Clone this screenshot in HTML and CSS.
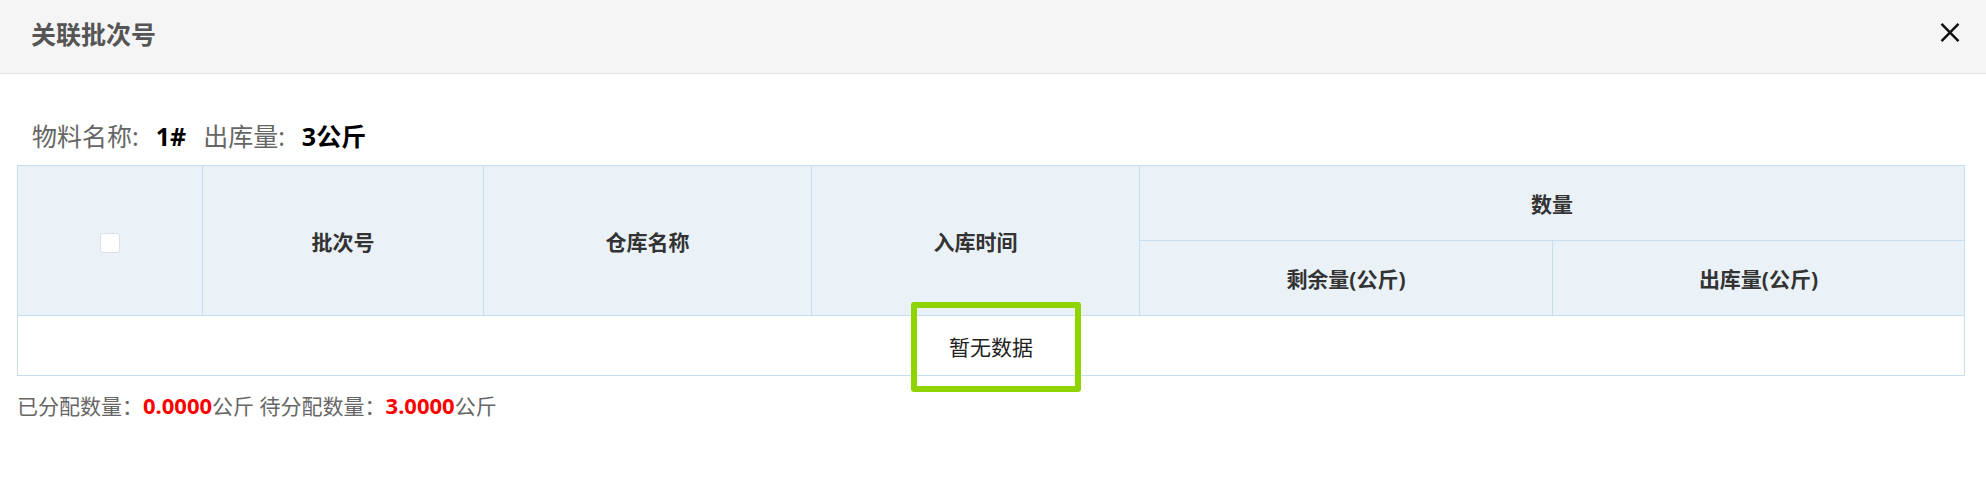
FILE: index.html
```html
<!DOCTYPE html>
<html lang="zh-CN">
<head>
<meta charset="utf-8">
<title>关联批次号</title>
<link rel="stylesheet" href="styles.css">
</head>
<body>
<div class="dialog">
  <div class="dialog-header">
    <span class="dialog-title">关联批次号</span>
    <button class="dialog-close" type="button" aria-label="关闭">
      <svg width="20" height="19" viewBox="0 0 20 19"><path d="M1.5 0.8 L18.5 18.2 M18.5 0.8 L1.5 18.2" stroke="#111" stroke-width="2.4" fill="none"/></svg>
    </button>
  </div>
  <div class="dialog-body">
    <div class="info">
      <span class="label">物料名称:</span><span class="value">1#</span><span class="label">出库量:</span><span class="value">3公斤</span>
    </div>
    <div class="table-wrap">
      <table class="batch-table">
        <colgroup>
          <col class="c-check">
          <col class="c-batch">
          <col class="c-store">
          <col class="c-time">
          <col class="c-remain">
          <col class="c-out">
        </colgroup>
        <thead>
          <tr class="row-top">
            <th rowspan="2"><span class="checkbox"></span></th>
            <th rowspan="2">批次号</th>
            <th rowspan="2">仓库名称</th>
            <th rowspan="2">入库时间</th>
            <th colspan="2">数量</th>
          </tr>
          <tr class="row-sub">
            <th>剩余量(公斤)</th>
            <th>出库量(公斤)</th>
          </tr>
        </thead>
        <tbody>
          <tr class="row-empty"><td colspan="6" class="empty">暂无数据</td></tr>
        </tbody>
      </table>
      <div class="highlight"></div>
    </div>
    <div class="summary">已分配数量：<em>0.0000</em>公斤 待分配数量：<em>3.0000</em>公斤</div>
  </div>
</div>
</body>
</html>
```
FILE: styles.css
```css
html, body {
  margin: 0;
  padding: 0;
  background: #ffffff;
}
body {
  font-family: "Noto Sans", "Noto Sans CJK SC", sans-serif;
  color: #333;
}
.dialog {
  width: 1986px;
}
.dialog-header {
  height: 73px;
  border-bottom: 1px solid #e2e2e2;
  background: #f5f5f5;
  display: flex;
  align-items: center;
  justify-content: space-between;
  padding: 0 26px 0 32px;
  box-sizing: content-box;
  width: 1928px;
}
.dialog-title {
  font-size: 25px;
  font-weight: bold;
  color: #555;
  line-height: 30px;
  margin-top: -5px;
  margin-left: -1px;
}
.dialog-close {
  border: 0;
  background: transparent;
  padding: 0;
  width: 20px;
  height: 19px;
  margin-top: -9px;
  display: flex;
}
.dialog-body {
  padding: 0 17px;
}
.info {
  padding-left: 15px;
  margin-top: 42px;
  height: 40px;
  line-height: 40px;
  font-size: 25px;
  margin-bottom: 9px;
  white-space: nowrap;
}
.info .label {
  color: #666;
}
.info .value {
  color: #000;
  font-weight: bold;
  margin-left: 17px;
  margin-right: 17px;
}
.table-wrap {
  position: relative;
  width: 1947px;
}
.batch-table {
  width: 1947px;
  table-layout: fixed;
  border-collapse: collapse;
  font-size: 21px;
}
.c-check { width: 185px; }
.c-batch { width: 281px; }
.c-store { width: 328px; }
.c-time { width: 328px; }
.c-remain { width: 413px; }
.c-out { width: 412px; }
.batch-table th,
.batch-table td {
  border: 1px solid #c6def1;
  padding: 0;
  text-align: center;
}
.batch-table th {
  background: #eaf2f8;
  font-weight: bold;
  color: #333;
}
.row-top, .row-sub {
  height: 75px;
}
.row-empty {
  height: 60px;
}
.checkbox {
  display: inline-block;
  width: 18px;
  height: 18px;
  border: 1px solid #dcdfe6;
  border-radius: 3px;
  background: #fff;
  vertical-align: middle;
}
.empty {
  color: #222;
  font-size: 21px;
}
.highlight {
  position: absolute;
  left: 894px;
  top: 137px;
  width: 158px;
  height: 78px;
  border: 6px solid #8fd400;
  border-radius: 3px;
  pointer-events: none;
}
.summary {
  margin-top: 14px;
  line-height: 30px;
  font-size: 21px;
  color: #666;
  white-space: nowrap;
}
.summary em {
  font-style: normal;
  font-weight: bold;
  font-size: 22px;
  color: #ff0000;
}
```
